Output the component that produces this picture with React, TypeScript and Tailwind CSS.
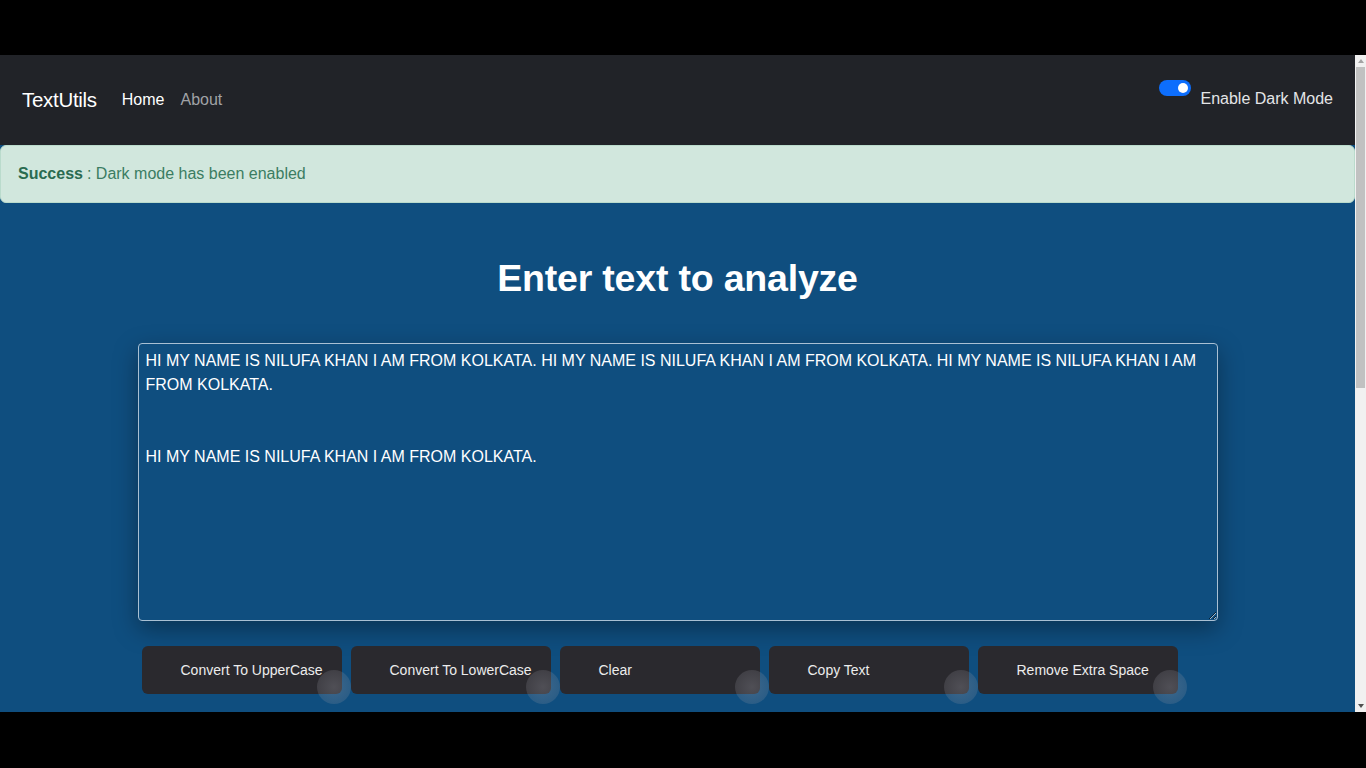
import { useState } from "react";

const initialText =
  "HI MY NAME IS NILUFA KHAN I AM FROM KOLKATA. HI MY NAME IS NILUFA KHAN I AM FROM KOLKATA. HI MY NAME IS NILUFA KHAN I AM FROM KOLKATA.\n\n\nHI MY NAME IS NILUFA KHAN I AM FROM KOLKATA.";

const buttons = [
  "Convert To UpperCase",
  "Convert To LowerCase",
  "Clear",
  "Copy Text",
  "Remove Extra Space",
];

export default function App() {
  const [text, setText] = useState(initialText);

  return (
    <div className="h-screen flex flex-col bg-black font-['Liberation_Sans',Arial,sans-serif] overflow-hidden">
      <div className="h-[55px] shrink-0" />
      <div className="flex h-[657px] shrink-0">
        <div className="flex-1 bg-[#0f4e7f] flex flex-col overflow-hidden">
          {/* navbar */}
          <nav className="h-[90px] shrink-0 bg-[#212328] flex items-center pl-[22px] pr-[22px]">
            <span className="text-[20.5px] text-white tracking-[-0.3px]">TextUtils</span>
            <a className="ml-[25px] text-[16px] text-white">Home</a>
            <a className="ml-[16px] text-[16px] text-[#a0a2a6]">About</a>
            <div className="ml-auto flex items-start self-start mt-[25px]">
              <div className="w-[32px] h-[16px] rounded-full bg-[#0d6efd] flex items-center justify-end pr-[3px]">
                <div className="w-[10px] h-[10px] rounded-full bg-white" />
              </div>
              <span className="ml-[9px] mt-[7px] text-[16px] text-[#e4e5e7]">Enable Dark Mode</span>
            </div>
          </nav>

          {/* alert */}
          <div className="h-[58px] shrink-0 bg-[#d1e7dd] border border-[#badbcc] rounded-[6px] flex items-center pl-[17px] text-[16px] text-[#3b7d62]">
            <strong className="text-[#2a6b50]">Success</strong>
            <span className="ml-[4px]">: Dark mode has been enabled</span>
          </div>

          {/* main */}
          <div className="w-[1080px] mx-auto flex flex-col">
            <h1 className="mt-[55px] text-center text-[37.5px] font-bold text-white leading-[40px] tracking-[-0.2px]">
              Enter text to analyze
            </h1>
            <textarea
              value={text}
              onChange={(e) => setText(e.target.value)}
              className="mt-[45px] h-[278px] w-full resize-y bg-[#0f4e7f] text-white text-[16px] leading-[24px] px-[7px] py-[5px] border border-[#a9c0d3] rounded-[4px] outline-none shadow-[0_8px_24px_rgba(0,0,0,0.35)]"
            />
            <div className="mt-[25px] ml-[4px] flex gap-[9px]">
              {buttons.map((b) => (
                <button
                  key={b}
                  type="button"
                  className="relative w-[200px] h-[48px] rounded-[6px] bg-[#2a292e] text-left pl-[39px] text-[14px] text-[#ececec]"
                >
                  {b}
                  <span className="absolute right-[-9px] bottom-[-10px] w-[34px] h-[34px] rounded-full bg-[radial-gradient(circle,rgba(150,150,160,0.35),rgba(150,150,160,0.15))]" />
                </button>
              ))}
            </div>
          </div>
        </div>

        {/* scrollbar */}
        <div className="w-[11px] bg-[#f1f1f1] flex flex-col items-center">
          <div className="h-[12px] flex items-center justify-center">
            <div className="w-0 h-0 border-l-[3px] border-r-[3px] border-b-[4px] border-l-transparent border-r-transparent border-b-[#a3a3a3]" />
          </div>
          <div className="w-[9px] h-[321px] bg-[#c1c1c1]" />
          <div className="flex-1" />
          <div className="h-[12px] flex items-center justify-center">
            <div className="w-0 h-0 border-l-[3px] border-r-[3px] border-t-[4px] border-l-transparent border-r-transparent border-t-[#505050]" />
          </div>
        </div>
      </div>
      <div className="flex-1" />
    </div>
  );
}
